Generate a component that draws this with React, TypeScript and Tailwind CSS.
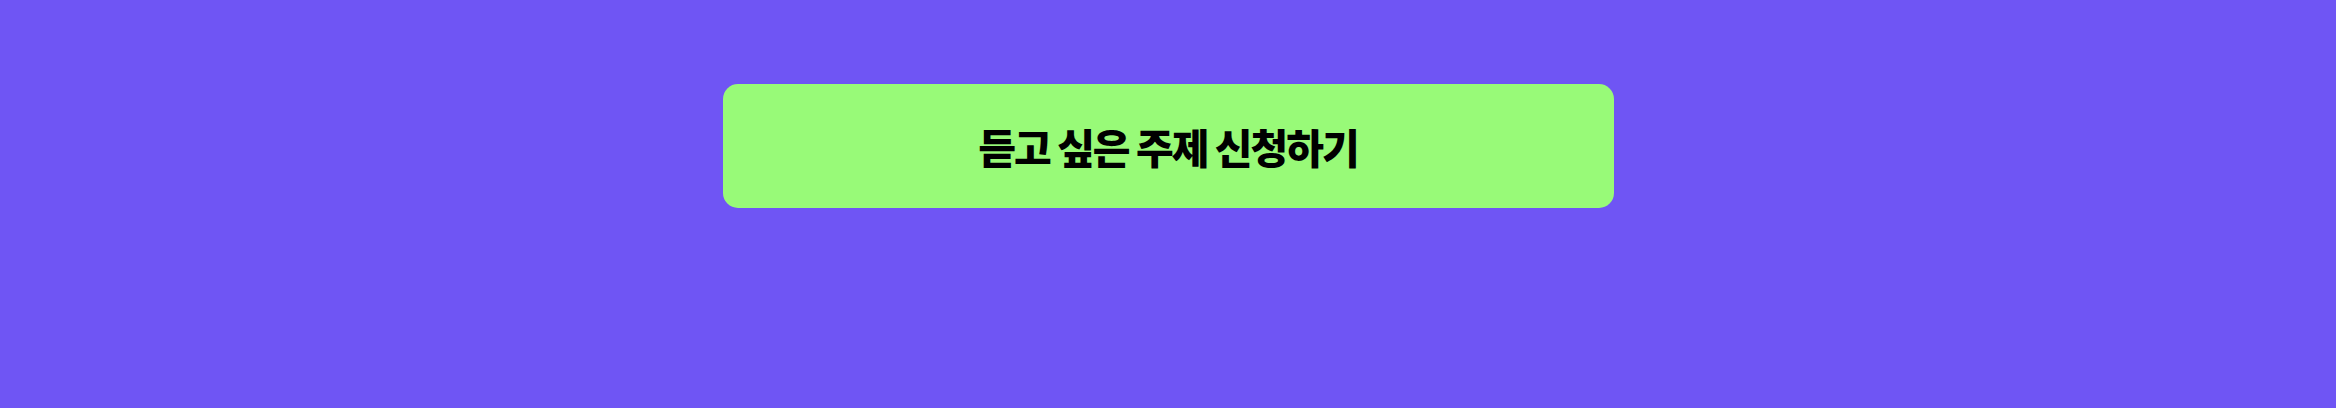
export default function App() {
  return (
    <div className="w-full h-[408px] bg-[#6f55f4] flex justify-center pt-[84px]">
      <button
        type="button"
        className="w-[891px] h-[124px] rounded-[15px] bg-[#98fa78] flex items-center justify-center text-black font-extrabold text-[41px] tracking-[-2px] leading-none"
        style={{ fontFamily: '"Noto Sans CJK KR", "Noto Sans", sans-serif' }}
      >
        듣고 싶은 주제 신청하기
      </button>
    </div>
  );
}
